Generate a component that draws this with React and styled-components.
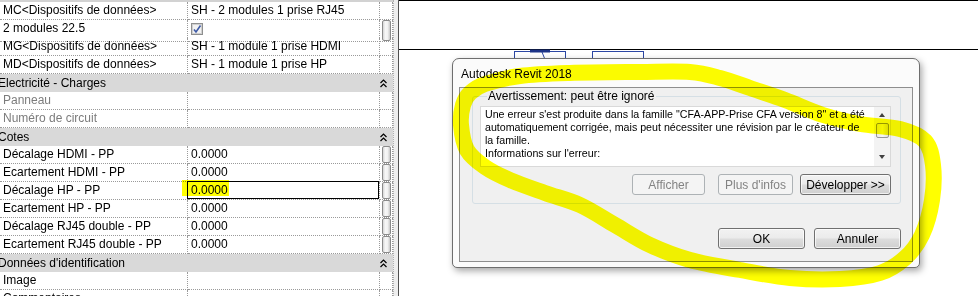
import React from "react";
import styled, { createGlobalStyle } from "styled-components";

const GlobalStyle = createGlobalStyle`
  html, body { margin: 0; padding: 0; background: #ffffff; }
  body { overflow: hidden; font-family: "Liberation Sans", Arial, sans-serif; }
`;

const Screen = styled.div`
  position: relative;
  display: flex;
  width: 978px;
  height: 296px;
  overflow: hidden;
  background: #ffffff;
  font-family: "Liberation Sans", Arial, sans-serif;
  color: #000;
`;

/* ---------- property palette ---------- */
const Palette = styled.div`
  flex: 0 0 399px;
  display: flex;
  background: #fff;
`;

const Grid = styled.div`
  flex: 0 0 393px;
  display: flex;
  flex-direction: column;
  border-top: 2px solid #d2d2d2;
  overflow: hidden;
`;

const PaletteEdge = styled.div`
  flex: 1;
  background: #eeeeee;
  border-left: 1px dotted #b0b0b0;
  border-right: 1px solid #505050;
`;

const Row = styled.div`
  display: grid;
  grid-template-columns: 188px 192px 13px;
  height: 18px;
  flex: 0 0 18px;
  background: ${(p) => (p.$header ? "#d9d9d9" : "#ffffff")};
`;

const Cell = styled.div`
  position: relative;
  box-sizing: border-box;
  border-right: 1px dotted #9a9a9a;
  border-bottom: 1px dotted #9a9a9a;
  padding-left: 3px;
  font-size: 12px;
  line-height: 17px;
  white-space: nowrap;
  overflow: hidden;
  color: ${(p) => (p.$muted ? "#7c7c7c" : "#000")};
`;

const ValueCell = styled(Cell)`
  padding-left: 3px;
  overflow: visible;
  ${(p) =>
    p.$selected &&
    `
    &::after {
      content: "";
      position: absolute;
      left: -1px; top: -1px; right: 0; bottom: 0;
      border: 1px solid #000;
    }
  `}
`;

const ButtonCell = styled(Cell)`
  padding: 0 0 0 2px;
  display: flex;
  align-items: stretch;
`;

const MiniButton = styled.div`
  width: 9px;
  box-sizing: border-box;
  border: 1px solid #8a8a8a;
  border-radius: 2px;
  background: linear-gradient(90deg, #d6d6d6 0%, #f7f7f7 35%, #f2f2f2 65%, #c9c9c9 100%);
`;

const HeaderLabel = styled.div`
  grid-column: 1 / 3;
  font-size: 12px;
  line-height: 18px;
  margin-left: -2px;
  white-space: nowrap;
`;

const HeaderToggle = styled.div`
  display: flex;
  align-items: center;
`;

const Check = () => (
  <svg width="13" height="13" viewBox="0 0 13 13" style={{ marginTop: 3 }}>
    <rect x="0.5" y="0.5" width="11" height="11" fill="#e4e4e4" stroke="#8e8f8f" />
    <rect x="1.5" y="1.5" width="9" height="9" fill="#f2f2f2" stroke="#d0d0d0" />
    <path d="M3 6.5 L5 9 L9.5 2.5" fill="none" stroke="#3d5aa6" strokeWidth="1.6" />
  </svg>
);

const CollapseIcon = () => (
  <svg width="8" height="9" viewBox="0 0 8 9">
    <path d="M0.5 4 L3.5 1 L6.5 4 M0.5 8 L3.5 5 L6.5 8" fill="none" stroke="#000" strokeWidth="1.2" />
  </svg>
);

const rows = [
  { label: "MC<Dispositifs de données>", value: "SH - 2 modules 1 prise RJ45" },
  { label: "2 modules 22.5", check: true, button: true },
  { label: "MG<Dispositifs de données>", value: "SH - 1 module 1 prise HDMI" },
  { label: "MD<Dispositifs de données>", value: "SH - 1 module 1 prise HP" },
  { header: "Electricité - Charges" },
  { label: "Panneau", muted: true },
  { label: "Numéro de circuit", muted: true },
  { header: "Cotes" },
  { label: "Décalage HDMI - PP", value: "0.0000", button: true },
  { label: "Ecartement HDMI - PP", value: "0.0000", button: true },
  { label: "Décalage HP - PP", value: "0.0000", button: true, selected: true },
  { label: "Ecartement HP - PP", value: "0.0000", button: true },
  { label: "Décalage RJ45 double - PP", value: "0.0000", button: true },
  { label: "Ecartement RJ45 double - PP", value: "0.0000", button: true },
  { header: "Données d'identification" },
  { label: "Image" },
  { label: "Commentaires" },
];

/* ---------- drawing canvas ---------- */
const Canvas = styled.div`
  flex: 1;
  background: #fff;
`;

const Drawing = () => (
  <svg width="579" height="296" viewBox="0 0 579 296">
    <line x1="0" y1="0.5" x2="579" y2="0.5" stroke="#000" />
    <line x1="0" y1="49.5" x2="579" y2="49.5" stroke="#000" />
    <g stroke="#2c47a4" fill="none">
      <rect x="115.5" y="51.5" width="51" height="40" />
      <rect x="193.5" y="51.5" width="51" height="40" />
      <line x1="143" y1="52" x2="147" y2="62" />
    </g>
    <line x1="131" y1="51" x2="151" y2="51" stroke="#1d3488" strokeWidth="3" />
  </svg>
);

/* ---------- dialog ---------- */
const Dialog = styled.div`
  position: absolute;
  left: 452px;
  top: 58px;
  width: 468px;
  box-sizing: border-box;
  border: 1px solid #6e6e6e;
  border-radius: 7px 7px 5px 5px;
  background: #fbfbfb;
  box-shadow: 2px 3px 7px rgba(0, 0, 0, 0.35);
  padding: 0 6px 5px 6px;
  display: flex;
  flex-direction: column;
`;

const TitleBar = styled.div`
  height: 28px;
  display: flex;
  align-items: center;
  padding-left: 2px;
  padding-top: 1px;
  box-sizing: border-box;
  font-size: 12px;
  color: #000;
`;

const Client = styled.div`
  border: 1px solid #8e8e8e;
  background: #f0f0f0;
  padding: 1px 11px 12px 12px;
  display: flex;
  flex-direction: column;
`;

const Group = styled.fieldset`
  margin: 0;
  padding: 3px 9px 8px 7px;
  border: 1px solid #d5dfe5;
  border-radius: 3px;
  display: flex;
  flex-direction: column;
`;

const Legend = styled.legend`
  margin-left: 7px;
  padding: 0 1px;
  font-size: 12px;
  line-height: 14px;
`;

const TextBox = styled.div`
  display: flex;
  height: 61px;
  box-sizing: border-box;
  border: 1px solid #d9d9d9;
  background: #fff;
`;

const TextBody = styled.div`
  flex: 1;
  padding: 1px 4px 0 4px;
  font-size: 10.67px;
  line-height: 13px;
  white-space: nowrap;
  overflow: hidden;
`;

const Scrollbar = styled.div`
  flex: 0 0 16px;
  display: flex;
  flex-direction: column;
  align-items: center;
  background: #f3f3f3;
  padding: 6px 0 7px;
  box-sizing: border-box;
`;

const ScrollArrow = styled.div`
  width: 0;
  height: 0;
  border-left: 3.5px solid transparent;
  border-right: 3.5px solid transparent;
  ${(p) => (p.$down ? "border-top: 4px solid #404040;" : "border-bottom: 4px solid #404040;")}
`;

const Thumb = styled.div`
  width: 13px;
  height: 15px;
  margin: 6px 0 auto;
  box-sizing: border-box;
  border: 1px solid #979797;
  border-radius: 2px;
  background: linear-gradient(90deg, #eaeaea, #f6f6f6 50%, #dedede);
`;

const ButtonRow = styled.div`
  display: flex;
  justify-content: flex-end;
  margin-top: 7px;
`;

const Footer = styled.div`
  display: flex;
  justify-content: flex-end;
  margin-top: 24px;
  gap: 9px;
`;

const Button = styled.div`
  width: ${(p) => p.$w}px;
  margin-left: ${(p) => p.$ml || 0}px;
  height: 21px;
  box-sizing: border-box;
  display: flex;
  align-items: center;
  justify-content: center;
  font-size: 12px;
  border-radius: 3px;
  border: 1px solid ${(p) => (p.$disabled ? "#adb2b5" : "#707070")};
  color: ${(p) => (p.$disabled ? "#838383" : "#000")};
  background: ${(p) =>
    p.$disabled
      ? "#f4f4f4"
      : "linear-gradient(180deg, #f2f2f2 0%, #ebebeb 48%, #dddddd 52%, #cfcfcf 100%)"};
  box-shadow: ${(p) => (p.$disabled ? "none" : "inset 0 0 0 1px rgba(255,255,255,0.7)")};
`;

/* ---------- yellow marker ---------- */
const MarkerLayer = styled.svg`
  position: absolute;
  left: 0;
  top: 0;
  width: 978px;
  height: 296px;
  pointer-events: none;
  mix-blend-mode: multiply;
`;

function smoothClosed(pts) {
  const n = pts.length;
  let d = `M${pts[0][0]},${pts[0][1]}`;
  for (let i = 0; i < n; i++) {
    const p0 = pts[(i - 1 + n) % n];
    const p1 = pts[i];
    const p2 = pts[(i + 1) % n];
    const p3 = pts[(i + 2) % n];
    const c1 = [p1[0] + (p2[0] - p0[0]) / 6, p1[1] + (p2[1] - p0[1]) / 6];
    const c2 = [p2[0] - (p3[0] - p1[0]) / 6, p2[1] - (p3[1] - p1[1]) / 6];
    d += ` C${c1[0].toFixed(1)},${c1[1].toFixed(1)} ${c2[0].toFixed(1)},${c2[1].toFixed(1)} ${p2[0]},${p2[1]}`;
  }
  return d + " Z";
}

const loop = [
  [485, 84], [520, 76], [570, 73], [640, 72], [690, 72], [720, 78], [750, 88],
  [785, 100], [823, 115], [860, 124], [900, 129], [925, 141], [933, 165],
  [932, 200], [922, 235], [905, 258], [880, 273], [840, 279], [790, 278],
  [740, 270], [690, 260], [650, 245], [615, 225], [580, 205], [545, 193],
  [510, 180], [485, 167], [467, 150], [461, 125], [463, 105], [470, 93],
];

export default function App() {
  return (
    <Screen>
      <GlobalStyle />
      <Palette>
        <Grid>
          {rows.map((r, i) =>
            r.header ? (
              <Row key={i} $header>
                <HeaderLabel>{r.header}</HeaderLabel>
                <HeaderToggle>
                  <CollapseIcon />
                </HeaderToggle>
              </Row>
            ) : (
              <Row key={i}>
                <Cell $muted={r.muted}>{r.label}</Cell>
                <ValueCell $selected={r.selected}>
                  {r.check ? <Check /> : r.value}
                </ValueCell>
                <ButtonCell>{r.button && <MiniButton />}</ButtonCell>
              </Row>
            )
          )}
        </Grid>
        <PaletteEdge />
      </Palette>
      <Canvas>
        <Drawing />
      </Canvas>

      <Dialog>
        <TitleBar>Autodesk Revit 2018</TitleBar>
        <Client>
          <Group>
            <Legend>Avertissement: peut être ignoré</Legend>
            <TextBox>
              <TextBody>
                <div>Une erreur s'est produite dans la famille "CFA-APP-Prise CFA version 8" et a été</div>
                <div>automatiquement corrigée, mais peut nécessiter une révision par le créateur de</div>
                <div>la famille.</div>
                <div>Informations sur l'erreur:</div>
              </TextBody>
              <Scrollbar>
                <ScrollArrow />
                <Thumb />
                <ScrollArrow $down />
              </Scrollbar>
            </TextBox>
            <ButtonRow>
              <Button $w={73} $disabled>Afficher</Button>
              <Button $w={75} $ml={13} $disabled>Plus d'infos</Button>
              <Button $w={91} $ml={7}>Développer &gt;&gt;</Button>
            </ButtonRow>
          </Group>
          <Footer>
            <Button $w={87}>OK</Button>
            <Button $w={87}>Annuler</Button>
          </Footer>
        </Client>
      </Dialog>

      <MarkerLayer viewBox="0 0 978 296">
        <rect x="182" y="180" width="47" height="16" fill="#ffff00" />
        <path d={smoothClosed(loop)} fill="none" stroke="#ffff00" strokeWidth="16" strokeLinejoin="round" />
      </MarkerLayer>
    </Screen>
  );
}
